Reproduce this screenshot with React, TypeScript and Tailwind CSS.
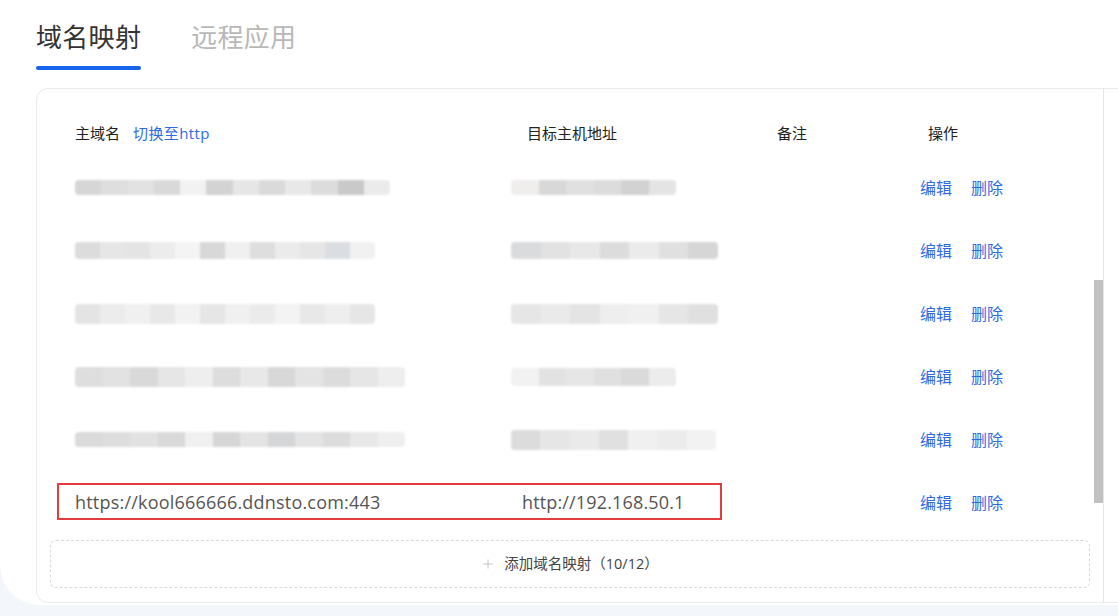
import React from 'react';
import { Plus } from 'lucide-react';

const FONT = '[font-family:"Open_Sans","Noto_Sans_CJK_SC",sans-serif]';

type BarSpec = { w: string; h: string; shades: string[] };

type Row = { host?: BarSpec; target?: BarSpec; hostText?: string; targetText?: string; marked?: boolean };

const rows: Row[] = [
  {
    host: { w: 'w-[315px]', h: 'h-[15px]', shades: ['bg-[#d6d6d6]', 'bg-[#dedede]', 'bg-[#e2e2e2]', 'bg-[#d9d9d9]', 'bg-[#f2f2f2]', 'bg-[#d3d3d3]', 'bg-[#e6e6e6]', 'bg-[#dadada]', 'bg-[#e8e8e8]', 'bg-[#dcdcdc]', 'bg-[#c9c9c9]', 'bg-[#ebebeb]'] },
    target: { w: 'w-[165px]', h: 'h-[15px]', shades: ['bg-[#f0eded]', 'bg-[#d8d8d8]', 'bg-[#e0e0e0]', 'bg-[#dcdcdc]', 'bg-[#d2d2d2]', 'bg-[#e4e4e4]'] },
  },
  {
    host: { w: 'w-[300px]', h: 'h-[17px]', shades: ['bg-[#dcdcdc]', 'bg-[#e6e6e6]', 'bg-[#e4e4e4]', 'bg-[#ececec]', 'bg-[#f4f4f4]', 'bg-[#d8d8d8]', 'bg-[#f0f0f0]', 'bg-[#dedede]', 'bg-[#ebebeb]', 'bg-[#e6e6e6]', 'bg-[#dadde2]', 'bg-[#f1f1f1]'] },
    target: { w: 'w-[207px]', h: 'h-[17px]', shades: ['bg-[#d9dbdc]', 'bg-[#e2e2e2]', 'bg-[#e8e8e8]', 'bg-[#dcdcdc]', 'bg-[#ebebeb]', 'bg-[#e0e0e0]', 'bg-[#d6d6d6]'] },
  },
  {
    host: { w: 'w-[300px]', h: 'h-[20px]', shades: ['bg-[#e4e4e4]', 'bg-[#ececec]', 'bg-[#f0f0f0]', 'bg-[#e8e8e8]', 'bg-[#f2f2f2]', 'bg-[#e6e6e6]', 'bg-[#f0f0f0]', 'bg-[#ebebeb]', 'bg-[#f3f3f3]', 'bg-[#e8e8e8]', 'bg-[#eeeeee]', 'bg-[#e6e6e6]'] },
    target: { w: 'w-[207px]', h: 'h-[20px]', shades: ['bg-[#e6e6e6]', 'bg-[#eaeaea]', 'bg-[#e4e4e4]', 'bg-[#eeeeee]', 'bg-[#f0f0f0]', 'bg-[#e6e6e6]', 'bg-[#e0e0e0]'] },
  },
  {
    host: { w: 'w-[330px]', h: 'h-[20px]', shades: ['bg-[#dedede]', 'bg-[#e2e2e2]', 'bg-[#d9d9d9]', 'bg-[#e6e6e6]', 'bg-[#eeeeee]', 'bg-[#dddddd]', 'bg-[#e8e8e8]', 'bg-[#d8d8d8]', 'bg-[#e4e4e4]', 'bg-[#dcdcdc]', 'bg-[#e6e6e6]', 'bg-[#eeeeee]'] },
    target: { w: 'w-[165px]', h: 'h-[18px]', shades: ['bg-[#f2f2f2]', 'bg-[#e2e2e2]', 'bg-[#e6e6e6]', 'bg-[#e0e0e0]', 'bg-[#dadada]', 'bg-[#ececec]'] },
  },
  {
    host: { w: 'w-[330px]', h: 'h-[15px]', shades: ['bg-[#dadada]', 'bg-[#dedede]', 'bg-[#e2e2e2]', 'bg-[#d9d9d9]', 'bg-[#f0f0f0]', 'bg-[#d6d6d6]', 'bg-[#e4e4e4]', 'bg-[#d4d6d8]', 'bg-[#e4e4e4]', 'bg-[#dcdcdc]', 'bg-[#e8e8e8]', 'bg-[#efefef]'] },
    target: { w: 'w-[205px]', h: 'h-[20px]', shades: ['bg-[#dcdcdc]', 'bg-[#e6e6e6]', 'bg-[#eaeaea]', 'bg-[#e0e0e0]', 'bg-[#f0f0f0]', 'bg-[#ececec]', 'bg-[#f2f2f2]'] },
  },
  { hostText: 'https://kool666666.ddnsto.com:443', targetText: 'http://192.168.50.1', marked: true },
];

const BlurBar = ({ spec }: { spec: BarSpec }) => (
  <div className={`flex ${spec.w} ${spec.h} overflow-hidden rounded-[4px] blur-[0.8px]`}>
    {spec.shades.map((s, i) => (
      <div key={i} className={`flex-1 ${s}`} />
    ))}
  </div>
);

export default function App() {
  return (
    <div className={`h-[616px] w-[1118px] overflow-hidden bg-[#f3f6fa] ${FONT}`}>
      <div className="h-[605px] rounded-bl-[40px] bg-white pt-[19px]">
        {/* Tabs */}
        <div className="flex gap-[50px] pl-[36px]">
          <div className="flex flex-col">
            <span className="text-[26px] leading-[36px] tracking-[0.3px] text-[#333]">域名映射</span>
            <div className="mt-[11px] h-[4px] rounded-full bg-[#1764e8]" />
          </div>
          <span className="text-[26px] leading-[36px] tracking-[0.3px] text-[#b8b8b8]">远程应用</span>
        </div>

        {/* Card */}
        <div className="ml-[36px] mt-[18px] flex w-[1100px] rounded-tl-[12px] rounded-bl-[12px] border border-[#ebebeb] bg-white">
          <div className="flex w-[1057px] flex-col pt-[21px] pb-[14px]">
            {/* Header */}
            <div className="grid h-[46px] grid-cols-[452px_250px_143px_1fr] items-center pl-[38px] text-[15px] text-[#222]">
              <div className="flex items-center gap-[13px]">
                <span>主域名</span>
                <span className="tracking-[0.4px] text-[#2f6be0]">切换至http</span>
              </div>
              <span>目标主机地址</span>
              <span>备注</span>
              <span className="pl-[8px]">操作</span>
            </div>

            {/* Rows */}
            {rows.map((r, i) => (
              <div key={i} className="relative grid h-[63px] grid-cols-[452px_250px_143px_1fr] items-center pl-[38px]">
                {r.marked && (
                  <div className="absolute left-[20px] top-[12px] h-[37px] w-[665px] border-2 border-[#e33d3f]" />
                )}
                <div>
                  {r.host ? <BlurBar spec={r.host} /> : <span className="text-[18px] tracking-[0.2px] text-[#555]">{r.hostText}</span>}
                </div>
                <div className="-ml-[16px]">
                  {r.target ? <BlurBar spec={r.target} /> : <span className="ml-[11px] text-[18px] tracking-[0.15px] text-[#555]">{r.targetText}</span>}
                </div>
                <div />
                <div className="flex gap-[19px] text-[16px] text-[#2f6be0]">
                  <span>编辑</span>
                  <span>删除</span>
                </div>
              </div>
            ))}

            {/* Add */}
            <div className="ml-[13px] mr-[4px] mt-[6px] flex h-[48px] items-center justify-center gap-[9px] rounded-[6px] border border-dashed border-[#d9d9d9] text-[14.5px] text-[#444]">
              <Plus size={14} strokeWidth={1.5} className="text-[#bbb]" />
              <span>添加域名映射（10/12）</span>
            </div>
          </div>

          {/* Scrollbar */}
          <div className="w-[10px] border-r border-[#e6e6e6] pt-[191px]">
            <div className="h-[223px] bg-[#c1c1c1]" />
          </div>
          <div className="flex-1" />
        </div>
      </div>
    </div>
  );
}
